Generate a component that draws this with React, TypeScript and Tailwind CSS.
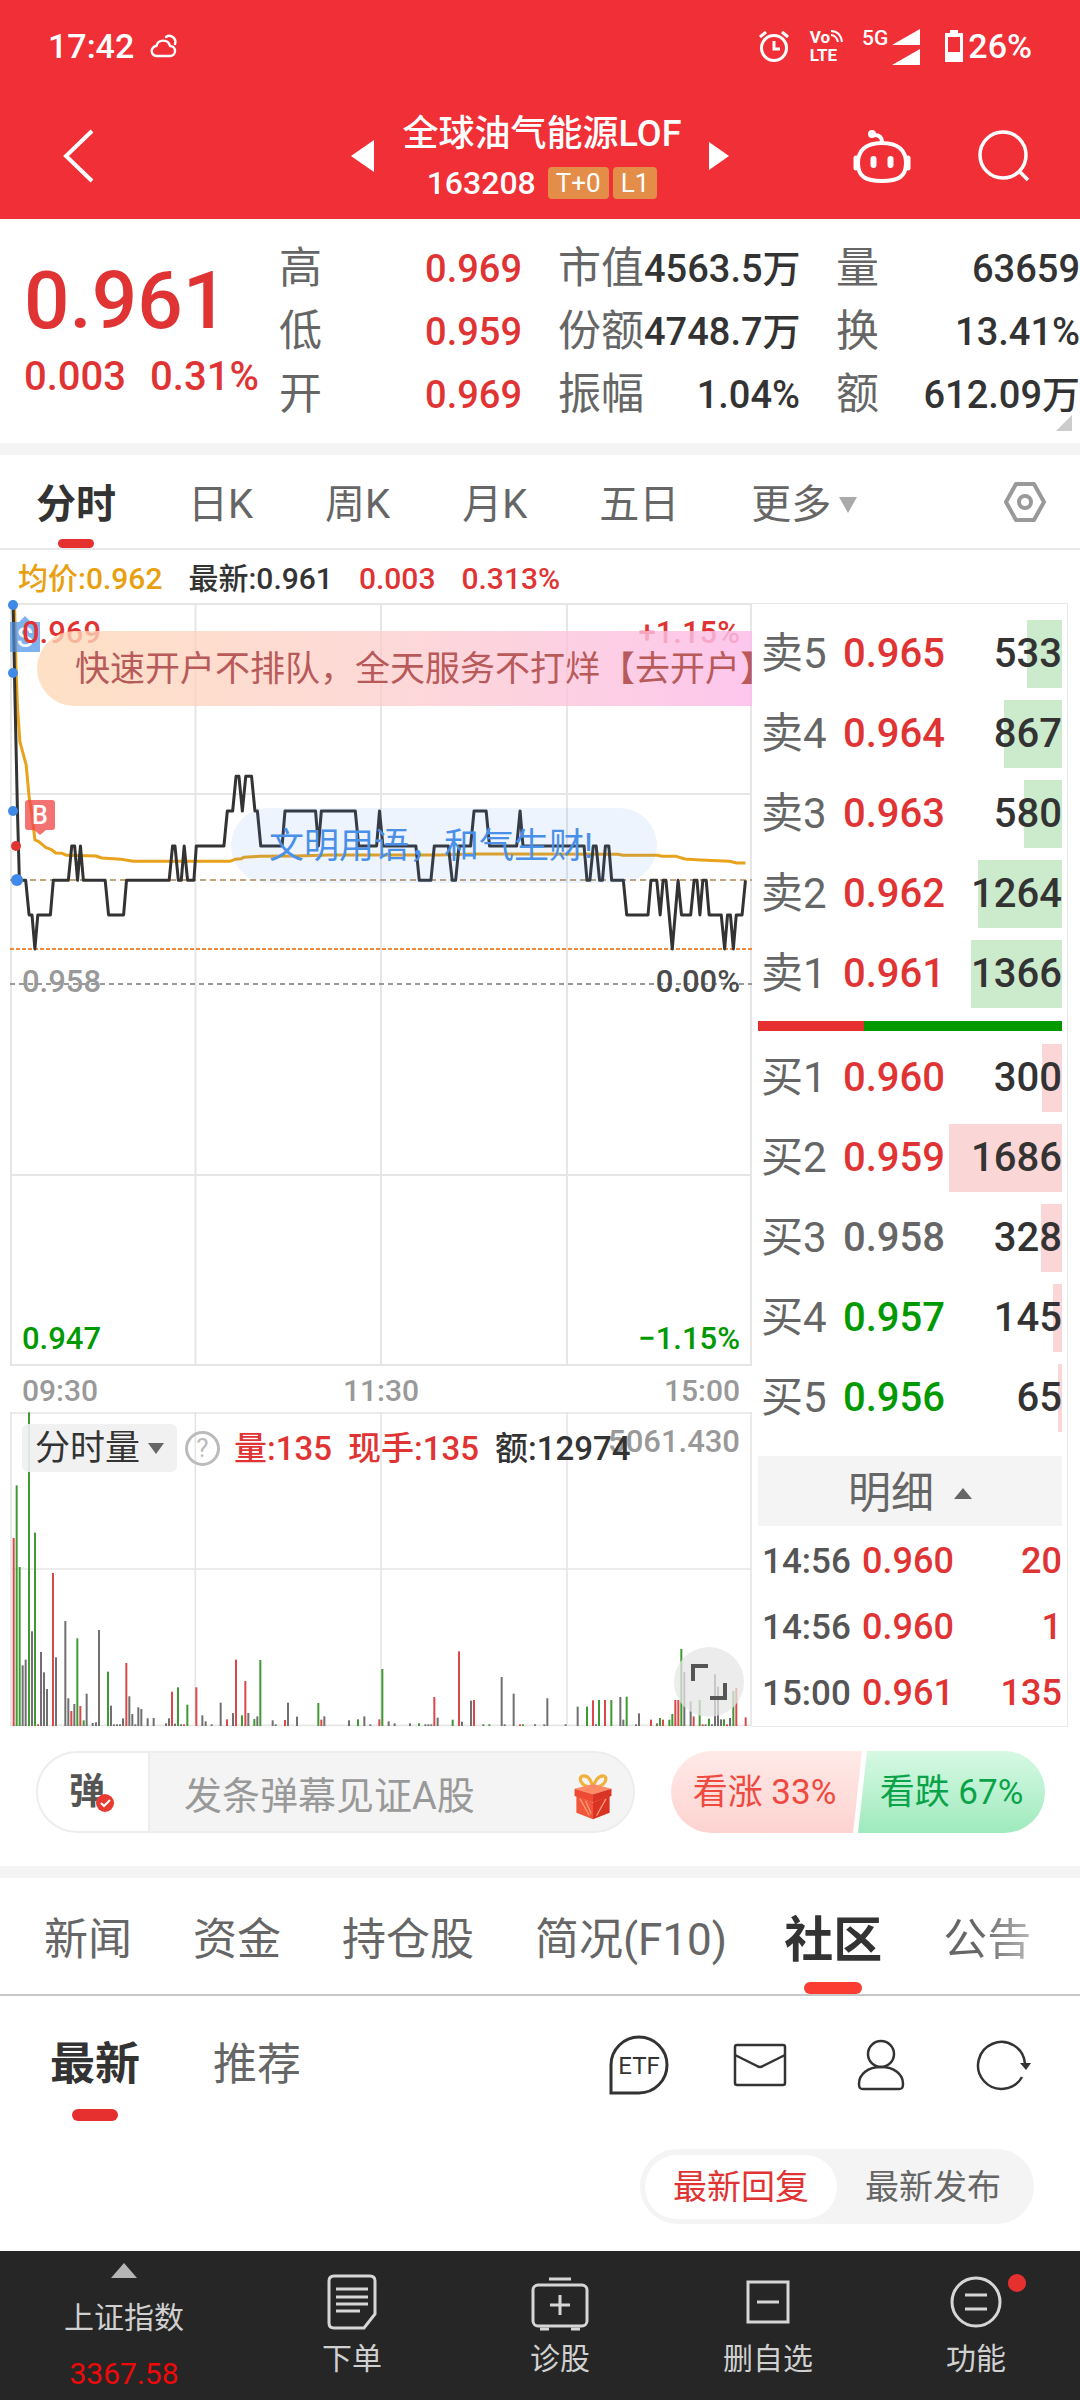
import { useState } from "react";
import type { ReactNode } from "react";

type Tone = "r" | "g" | "k";
type Bar = [number, number, Tone];

const toneFill: Record<Tone, string> = { r: "#d9494a", g: "#3f9a34", k: "#707070" };

const morning: Bar[] = [
  [41, 744, "r"], [50, 586, "g"], [59, 831, "g"], [68, 1126, "k"], [77, 1109, "k"], [87, 367, "g"], [96, 1024, "k"],
  [105, 728, "g"], [114, 1303, "r"], [123, 1086, "k"], [132, 1147, "k"], [141, 1197, "k"], [159, 849, "r"], [168, 1102, "k"],
  [196, 993, "k"], [205, 1225, "k"], [214, 1263, "r"], [223, 1242, "k"], [232, 1045, "g"], [241, 1248, "r"], [251, 1291, "g"],
  [260, 1211, "k"], [278, 1299, "k"], [288, 1297, "k"], [297, 1020, "k"], [324, 1145, "g"], [333, 1247, "k"], [342, 1303, "k"],
  [351, 1303, "k"], [360, 1303, "k"], [369, 1285, "k"], [379, 1119, "r"], [388, 1219, "k"], [397, 1272, "k"], [406, 1303, "k"],
  [415, 1252, "k"], [424, 1257, "k"], [443, 1285, "k"], [461, 1284, "k"], [498, 1300, "k"], [507, 1285, "k"], [516, 1205, "r"],
  [525, 1301, "k"], [534, 1192, "g"], [543, 1303, "k"], [552, 1303, "r"], [562, 1244, "g"], [589, 1192, "r"], [607, 1276, "k"],
  [617, 1294, "k"], [635, 1303, "k"], [662, 1238, "k"], [681, 1288, "r"], [699, 1269, "k"], [708, 1109, "r"], [726, 1276, "g"],
  [736, 1173, "r"], [745, 1269, "k"], [763, 1287, "g"], [772, 1279, "k"], [781, 1110, "g"], [818, 1291, "k"], [827, 1303, "k"],
  [855, 1290, "r"], [864, 1238, "k"], [891, 1280, "k"], [955, 1239, "g"], [964, 1289, "r"], [973, 1279, "k"], [1047, 1291, "k"],
  [1074, 1288, "g"], [1093, 1279, "k"], [1111, 1303, "k"], [1138, 1288, "r"], [1147, 1137, "g"], [1166, 1294, "k"], [1184, 1300, "k"],
];

const afternoon: Bar[] = [
  [60, 1300, "k"], [87, 1300, "g"], [106, 1303, "k"], [115, 1303, "k"], [124, 1303, "k"], [133, 1221, "r"], [143, 1283, "k"],
  [188, 1289, "g"], [207, 1084, "r"], [216, 1295, "k"], [243, 1232, "k"], [252, 1230, "r"], [280, 1303, "k"], [298, 1303, "g"],
  [335, 1161, "k"], [344, 1303, "k"], [371, 1211, "k"], [390, 1303, "r"], [399, 1303, "g"], [435, 1303, "k"], [463, 1303, "k"],
  [472, 1225, "k"], [527, 1303, "k"], [563, 1250, "k"], [591, 1250, "g"], [609, 1231, "r"], [618, 1303, "k"], [627, 1230, "g"],
  [645, 1230, "r"], [664, 1230, "g"], [691, 1221, "k"], [700, 1289, "k"], [710, 1220, "g"], [738, 1303, "k"], [747, 1270, "k"],
  [783, 1289, "r"], [801, 1300, "k"], [810, 1284, "g"], [819, 1289, "r"], [838, 1289, "g"], [847, 1272, "g"], [856, 1230, "r"],
  [865, 1230, "r"], [874, 1077, "g"], [883, 1146, "k"], [902, 1234, "k"], [911, 1279, "r"], [929, 1230, "g"], [938, 1303, "r"],
  [947, 1303, "k"], [957, 1286, "g"], [966, 1303, "k"], [975, 1153, "k"], [984, 1190, "k"], [993, 1288, "k"], [1002, 1288, "g"],
  [1011, 1303, "r"], [1020, 1284, "k"], [1030, 1203, "g"], [1039, 1194, "r"], [1067, 1282, "r"],
];

const AFTERNOON_START = 1170;
const bars: Bar[] = [...morning, ...afternoon.map(([x, y, t]): Bar => [x + AFTERNOON_START, y, t])];

const priceLine =
  "M27,-288 L31,0 L36,333 L40,541 L53,541 L60,645 L66,645 L72,747 L78,645 L104,645 L110,541 L141,541 L148,438 L154,438 L160,541 L166,438 L172,541 L217,541 L224,645 L255,645 L261,541 L349,541 L356,438 L361,438 L368,541 L374,541 L380,438 L387,541 L400,541 L405,438 L462,438 L469,333 L480,333 L487,229 L493,229 L500,333 L507,229 L519,229 L526,333 L531,333 L538,438 L582,438 L588,333 L651,333 L657,438 L663,333 L733,333 L740,438 L777,438 L783,333 L790,438 L858,438 L865,541 L889,541 L896,438 L925,438 L933,541 L940,541 L947,438 L971,438 L978,333 L1003,333 L1010,438 L1066,438 L1073,333 L1079,438 L1205,438 L1211,541 L1217,541 L1224,438 L1230,438 L1237,541 L1243,541 L1249,438 L1256,438 L1262,541 L1286,541 L1293,645 L1337,645 L1343,541 L1355,541 L1362,645 L1368,541 L1374,541 L1387,747 L1399,541 L1406,645 L1425,645 L1432,541 L1438,541 L1444,645 L1450,541 L1457,541 L1463,645 L1488,645 L1495,747 L1501,645 L1507,645 L1513,747 L1519,645 L1531,645 L1538,541";
const averageLine =
  "M30,-288 L33,-100 L36,20 L41,125 L54,195 L60,290 L66,345 L72,420 L80,425 L95,443 L105,448 L115,459 L128,460 L138,466 L198,468 L210,474 L250,478 L275,484 L474,484 L485,478 L498,476 L503,472 L535,469 L610,468 L680,465 L905,465 L975,462 L1275,463 L1285,466 L1357,466 L1365,469 L1395,469 L1413,477 L1445,480 L1505,484 L1520,489 L1538,489";

const RED = "text-[#e03434]";
const GREEN = "text-[#009900]";
const GREY = "text-[#666666]";

const sells = [
  ["卖5", "0.965", "533", 35],
  ["卖4", "0.964", "867", 58],
  ["卖3", "0.963", "580", 38],
  ["卖2", "0.962", "1264", 84],
  ["卖1", "0.961", "1366", 91],
] as const;

const buys = [
  ["买1", "0.960", "300", 20, RED],
  ["买2", "0.959", "1686", 113, RED],
  ["买3", "0.958", "328", 21, GREY],
  ["买4", "0.957", "145", 9, GREEN],
  ["买5", "0.956", "65", 4, GREEN],
] as const;

function StatusBar() {
  return (
    <div className="flex h-[92px] items-center justify-between px-12 font-medium">
      <div className="flex items-center gap-4">
        <span className="text-[34px] leading-none">17:42</span>
        <svg className="h-6 w-7" viewBox="0 0 28 24" fill="none" stroke="#fff" strokeWidth="2.4" strokeLinecap="round" aria-hidden="true">
          <path d="M7 22a5 5 0 0 1-.6-10A7 7 0 0 1 20 12a5 5 0 0 1 0 10Z" strokeLinejoin="round" />
          <path d="M16 3a6 6 0 0 1 9 7" />
        </svg>
      </div>
      <div className="flex items-center">
        <svg className="h-8 w-8" viewBox="0 0 32 32" fill="none" stroke="#fff" strokeWidth="3" aria-hidden="true">
          <circle cx="16" cy="18" r="12.5" />
          <path d="M16 11v8h6M2 7l6-5M30 7l-6-5" />
        </svg>
        <div className="ml-5 flex flex-col text-[17px] leading-[18px] font-bold">
          <span className="flex">
            Vo
            <svg className="h-4 w-4" viewBox="0 0 16 16" fill="none" stroke="#fff" strokeWidth="2" aria-hidden="true">
              <path d="M1 3c6 0 10 4 11 11M1 7c3 0 6 3 7 7" />
            </svg>
          </span>
          <span>LTE</span>
        </div>
        <div className="ml-4 flex items-start">
          <span className="text-[21px] leading-5">5G</span>
          <svg className="mt-px ml-1 h-9 w-7" viewBox="0 0 28 36" fill="#fff" aria-hidden="true">
            <path d="M28 0v16H0ZM28 20v16H0Z" />
          </svg>
        </div>
        <svg className="ml-6 h-8 w-5" viewBox="0 0 20 32" aria-hidden="true">
          <path d="M6 0h8v3h5v29H1V3h5Z" fill="#fff" />
          <path d="M4 7h12v15H4Z" fill="#f12f36" />
        </svg>
        <span className="ml-1 text-[34px] leading-none">26%</span>
      </div>
    </div>
  );
}

function TopBar() {
  return (
    <div className="grid h-[127px] grid-cols-[1fr_auto_1fr] items-center">
      <button aria-label="返回" className="ml-[62px] w-8">
        <svg className="h-14 w-8" viewBox="0 0 32 56" fill="none" stroke="#fff" strokeWidth="4" aria-hidden="true">
          <path d="M30 3 4 28l26 25" />
        </svg>
      </button>
      <div className="flex items-center">
        <button aria-label="上一只">
          <svg className="h-8 w-6" viewBox="0 0 24 32" fill="#fff" aria-hidden="true"><path d="M23 0v32L0 16Z" /></svg>
        </button>
        <div className="mx-7 flex flex-col items-center gap-3">
          <h1 className="text-[36px] leading-[42px] font-medium whitespace-nowrap">全球油气能源LOF</h1>
          <div className="flex h-8 items-center gap-1">
            <span className="mr-2 text-[32px] leading-none font-medium">163208</span>
            <span className="rounded-sm bg-[#e48d48] px-2 text-[26px] leading-8">T+0</span>
            <span className="rounded-sm bg-[#e48d48] px-2 text-[26px] leading-8">L1</span>
          </div>
        </div>
        <button aria-label="下一只">
          <svg className="h-7 w-5" viewBox="0 0 20 28" fill="#fff" aria-hidden="true"><path d="M0 0v28l20-14Z" /></svg>
        </button>
      </div>
      <div className="flex justify-end gap-[66px] pr-[50px]">
        <button aria-label="助手">
          <svg className="h-[54px] w-[60px]" viewBox="0 0 60 54" fill="none" stroke="#fff" strokeWidth="4" aria-hidden="true">
            <path d="M30 14C13 14 6 22 6 34c0 14 8 18 24 18s24-4 24-18c0-12-7-20-24-20Z" />
            <path d="M30 13c0-5-3-7-8-7" />
            <circle cx="20" cy="5" r="4" fill="#fff" stroke="none" />
            <path d="M4 29v10M56 29v10" strokeWidth="5" strokeLinecap="round" />
            <path d="M21.500 30v6M38.500 30v6" strokeWidth="6" strokeLinecap="round" />
          </svg>
        </button>
        <button aria-label="搜索">
          <svg className="h-[52px] w-[52px]" viewBox="0 0 52 52" fill="none" stroke="#fff" strokeWidth="3.500" aria-hidden="true">
            <circle cx="25" cy="25" r="23" />
            <path d="m41 41 9 9" />
          </svg>
        </button>
      </div>
    </div>
  );
}

function Stat({ label, value, tone = "text-[#333333]" }: { label: string; value: string; tone?: string }) {
  return (
    <div className="flex h-[63px] items-center justify-between whitespace-nowrap">
      <dt className="text-[43px] leading-none text-[#666666]">{label}</dt>
      <dd className={`text-[38px] leading-none font-medium ${tone}`}>{value}</dd>
    </div>
  );
}

function Quote() {
  return (
    <section className="relative flex h-[224px] pt-[18px] pl-6">
      <div className={`w-[255px] ${RED}`}>
        <div className="mt-5 text-[80px] leading-[88px] font-medium">0.961</div>
        <div className="mt-2 flex gap-6 text-[40px] leading-[48px] font-medium">
          <span>0.003</span>
          <span>0.31%</span>
        </div>
      </div>
      <dl className="w-[243px]">
        <Stat label="高" value="0.969" tone={RED} />
        <Stat label="低" value="0.959" tone={RED} />
        <Stat label="开" value="0.969" tone={RED} />
      </dl>
      <dl className="ml-9 w-[242px]">
        <Stat label="市值" value="4563.5万" />
        <Stat label="份额" value="4748.7万" />
        <Stat label="振幅" value="1.04%" />
      </dl>
      <dl className="ml-9 flex-1">
        <Stat label="量" value="63659" />
        <Stat label="换" value="13.41%" />
        <Stat label="额" value="612.09万" />
      </dl>
      <svg className="absolute right-2 bottom-3 h-4 w-4" viewBox="0 0 16 16" fill="#cccccc" aria-hidden="true"><path d="M16 0v16H0Z" /></svg>
    </section>
  );
}

function PeriodTabs() {
  return (
    <nav className="flex h-[95px] items-center border-b-2 border-[#e8e8e8] pr-[34px] pl-9 text-[40px] leading-none text-[#666666]">
      <div className="flex flex-1 items-center gap-[72px] pt-[6px] whitespace-nowrap">
        <button className="relative font-bold text-[#333333]">
          分时
          <span className="absolute -bottom-[23px] left-1/2 h-[9px] w-9 -translate-x-1/2 rounded-full bg-[#e63030]" />
        </button>
        <button>日K</button>
        <button>周K</button>
        <button>月K</button>
        <button>五日</button>
        <button className="flex items-center gap-2">
          更多
          <svg className="h-4 w-[18px]" viewBox="0 0 18 16" fill="#aaaaaa" aria-hidden="true"><path d="M0 0h18L9 16Z" /></svg>
        </button>
      </div>
      <button aria-label="设置">
        <svg className="h-[40px] w-[42px]" viewBox="0 0 42 40" fill="none" stroke="#999999" strokeWidth="4" strokeLinejoin="round" aria-hidden="true">
          <path d="M12 2h18l10 18-10 18H12L2 20Z" />
          <circle cx="21" cy="20" r="6" />
        </svg>
      </button>
    </nav>
  );
}

function PriceChart() {
  return (
    <div className="relative h-[763px] text-[31px] leading-none font-medium">
      <svg className="absolute inset-0 h-full w-full" viewBox="10 603 742 763" preserveAspectRatio="none" fill="none" aria-hidden="true">
        <g stroke="#e6e6e6" strokeWidth="2">
          <path d="M10 604H752M10 794H752M10 1175H752M10 1365H752M11 603V1366M195.500 603V1366M381 603V1366M567 603V1366M751 603V1366" />
        </g>
        <path d="M10 984H752" stroke="#999999" strokeWidth="2" strokeDasharray="5 4" />
        <path d="M10 880H752" stroke="#c2a47c" strokeWidth="2" strokeDasharray="6 4" />
        <path d="M10 949H752" stroke="#ee8a3a" strokeWidth="2" strokeDasharray="4 2" />
        <g transform="translate(0 700) scale(.4847 .3333)" strokeWidth="3" strokeLinejoin="round">
          <path d={averageLine} stroke="#e8a21c" vectorEffect="non-scaling-stroke" />
          <path d={priceLine} stroke="#333333" vectorEffect="non-scaling-stroke" />
        </g>
        <path d="M10 622h9l6-6 6 6h9v30H10Z" fill="#4a90e8" opacity=".7" />
        <text x="17" y="647" fontSize="27" fill="#fff" opacity=".9">S</text>
        <path d="M28 800h24q3 0 3 3v24q0 3-3 3h-6l-6 5-6-5h-6q-3 0-3-3v-24q0-3 3-3Z" fill="#ef4444" opacity=".75" />
        <text x="32" y="824" fontSize="25" fill="#fff">B</text>
        <g fill="#3f8ae8">
          <circle cx="13" cy="605" r="5" />
          <circle cx="13" cy="673" r="5" />
          <circle cx="13" cy="811" r="5" />
          <circle cx="17" cy="880" r="6" />
        </g>
        <circle cx="16" cy="846" r="5" fill="#e03434" />
      </svg>
      <span className={`absolute top-[14px] left-3 ${RED}`}>0.969</span>
      <span className={`absolute top-[14px] right-3 ${RED}`}>+1.15%</span>
      <span className="absolute top-[363px] left-3 text-[#999999]">0.958</span>
      <span className="absolute top-[363px] right-3 text-[#4a4a4a]">0.00%</span>
      <span className={`absolute bottom-3 left-3 ${GREEN}`}>0.947</span>
      <span className={`absolute right-3 bottom-3 ${GREEN}`}>−1.15%</span>
      <a
        href="#open"
        className="absolute top-7 right-0 left-[27px] flex h-[75px] items-center overflow-hidden rounded-l-full bg-linear-to-r from-[#fdd9b6]/80 via-[#fdc8c8]/70 to-[#fcbde9]/85 pt-[2px] pl-[38px] text-[35px] font-normal whitespace-nowrap text-[#b95a5a]"
      >
        快速开户不排队，全天服务不打烊【去开户】
      </a>
      <div className="absolute top-[205px] left-[221px] flex h-[75px] items-center rounded-full bg-[#4a90e8]/10 pt-[2px] pr-16 pl-[38px] text-[35px] font-normal whitespace-nowrap text-[#4a90e8]">
        文明用语，和气生财!
      </div>
    </div>
  );
}

function VolumeChart() {
  return (
    <div className="relative h-[314px] text-[33px] leading-none font-medium">
      <svg className="absolute inset-0 h-full w-full" viewBox="30 366 2226 942" preserveAspectRatio="none" aria-hidden="true">
        <path d="M30 369H2256M30 837H2256M30 1306H2256M33 366V1308M586 366V1308M1143 366V1308M1701 366V1308M2253 366V1308" stroke="#e6e6e6" strokeWidth="5" fill="none" />
        {bars.map(([x, y, tone]) => (
          <rect key={x} x={x - 3} y={y} width="6" height={1308 - y} fill={toneFill[tone]} />
        ))}
      </svg>
      <span className="absolute top-[14px] right-3 text-[31px] text-[#999999]">5061.430</span>
      <div className="absolute top-3 left-3 flex h-12 items-center whitespace-nowrap">
        <button className="flex h-12 items-center gap-2 rounded-md bg-[#f0f0f0]/90 px-[13px] text-[35px] font-normal text-[#333333]">
          分时量
          <svg className="h-[11px] w-4" viewBox="0 0 16 11" fill="#666666" aria-hidden="true"><path d="M0 0h16L8 11Z" /></svg>
        </button>
        <button aria-label="说明" className="ml-2 flex size-[35px] items-center justify-center rounded-full border-[3px] border-[#bbbbbb] text-[26px] font-normal text-[#bbbbbb]">?</button>
        <span className={`ml-[14px] ${RED}`}>量:135</span>
        <span className={`ml-4 ${RED}`}>现手:135</span>
        <span className="ml-4 text-[#333333]">额:12974</span>
      </div>
      <button aria-label="全屏" className="absolute right-2 bottom-[9px] flex size-[70px] items-center justify-center rounded-full bg-[#e6e6e6]/75">
        <svg className="size-9" viewBox="0 0 36 36" fill="none" stroke="#555555" strokeWidth="4" aria-hidden="true">
          <path d="M2 17V2h15M34 19v15H19" />
        </svg>
      </button>
    </div>
  );
}

function Level({ name, price, size, width, tone, fill }: { name: string; price: string; size: string; width: number; tone: string; fill: string }) {
  return (
    <li className="relative flex h-[68px] items-center text-[40px] leading-none font-medium">
      <span className={`absolute inset-y-0 right-0 ${fill}`} style={{ width }} />
      <span className="w-[85px] pl-[3px] text-[42px] font-normal whitespace-nowrap text-[#666666]">{name}</span>
      <span className={tone}>{price}</span>
      <span className="relative flex-1 text-right text-[#333333]">{size}</span>
    </li>
  );
}

function OrderBook() {
  return (
    <aside className="flex w-[316px] shrink-0 flex-col border-t border-r border-b border-[#e8e8e8] pr-[5px] pl-[6px]">
      <ul className="mt-4 flex flex-col gap-3">
        {sells.map(([n, p, s, w]) => (
          <Level key={n} name={n} price={p} size={s} width={w} tone={RED} fill="bg-[#cceacc]" />
        ))}
      </ul>
      <div className="mt-[13px] flex h-[10px]">
        <span className="w-[35%] bg-[#e63030]" />
        <span className="flex-1 bg-[#009900]" />
      </div>
      <ul className="mt-[13px] flex flex-col gap-3">
        {buys.map(([n, p, s, w, tone]) => (
          <Level key={n} name={n} price={p} size={s} width={w} tone={tone} fill="bg-[#fad6d6]" />
        ))}
      </ul>
      <button className="mt-6 flex h-[70px] items-center justify-center gap-5 bg-[#f4f4f4] pt-1 text-[43px] leading-none text-[#666666]">
        明细
        <svg className="h-[11px] w-[18px]" viewBox="0 0 18 11" fill="#666666" aria-hidden="true"><path d="M0 11h18L9 0Z" /></svg>
      </button>
      <table className="mt-[2px] w-full text-[36px] leading-none font-medium">
        <tbody>
          {[
            ["14:56", "0.960", "20"],
            ["14:56", "0.960", "1"],
            ["15:00", "0.961", "135"],
          ].map(([t, p, v], i) => (
            <tr key={i} className="h-[66px]">
              <td className="w-[104px] pl-1 text-[35px] text-[#555555]">{t}</td>
              <td className={RED}>{p}</td>
              <td className={`text-right ${RED}`}>{v}</td>
            </tr>
          ))}
        </tbody>
      </table>
    </aside>
  );
}

function CommentRow() {
  return (
    <section className="flex h-[139px] items-start gap-9 pt-6 pr-[35px] pl-9">
      <div className="flex h-[82px] flex-1 overflow-hidden rounded-full border-2 border-[#ededed] bg-[#f4f4f4]">
        <button aria-label="弹幕" className="flex w-[112px] items-center justify-center border-r-2 border-[#ededed] bg-white pr-3">
          <span className="relative text-[36px] leading-none font-bold text-[#555555]">
            弹
            <svg className="absolute -right-[10px] -bottom-[3px] size-5" viewBox="0 0 20 20" fill="none" aria-hidden="true">
              <circle cx="10" cy="10" r="9" fill="#e83c32" />
              <path d="m6 10 3 3 6-6" stroke="#fff" strokeWidth="2" />
            </svg>
          </span>
        </button>
        <input aria-label="发弹幕" placeholder="发条弹幕见证A股" className="min-w-0 flex-1 bg-transparent pt-2 pl-[34px] text-[38px] leading-none text-[#333333] outline-none placeholder:text-[#999999]" />
        <svg className="mt-5 mr-[18px] h-[48px] w-11 shrink-0" viewBox="0 0 44 52" fill="none" aria-hidden="true">
          <path d="M22 16C6 14 6 3 12 3s8 6 10 13C24 9 28 3 33 3s5 11-11 13Z" stroke="#f0b23c" strokeWidth="3.500" />
          <path d="M2 17 22 12l20 5-20 6Z" fill="#ff8a66" />
          <path d="M2 17l20 6v9L2 25Z" fill="#ef4a34" />
          <path d="M42 17l-20 6v9l20-7Z" fill="#d93425" />
          <path d="M4 25l18 7v18L4 43Z" fill="#f2543c" />
          <path d="M40 25l-18 7v18l18-7Z" fill="#da3323" />
          <path d="m8 28 10 18M14 30l6 14M36 28 26 46" stroke="#ff9a70" strokeWidth="1.500" />
        </svg>
      </div>
      <div className="flex h-[82px] w-[374px] overflow-hidden rounded-full text-[35px] leading-none whitespace-nowrap">
        <button className="flex-1 bg-linear-to-b from-[#ffeae8] to-[#fdd3d0] pr-1 text-[#ee4a40] [clip-path:polygon(0_0,100%_0,calc(100%-9px)_100%,0_100%)]">看涨 33%</button>
        <button className="-ml-1 flex-1 bg-linear-to-b from-[#d6f9e4] to-[#9eeabd] text-[#0ba34a] [clip-path:polygon(9px_0,100%_0,100%_100%,0_100%)]">看跌 67%</button>
      </div>
    </section>
  );
}

function CommunityTabs() {
  return (
    <nav className="flex h-[118px] items-center gap-[61px] overflow-hidden border-b-2 border-[#c8c8c8] pt-2 pl-11 text-[44px] leading-none whitespace-nowrap text-[#666666]">
      <button>新闻</button>
      <button>资金</button>
      <button>持仓股</button>
      <button>简况(F10)</button>
      <button className="relative -ml-1 flex h-full items-center text-[49px] font-bold text-[#333333]">
        社区
        <span className="absolute bottom-0 left-1/2 h-3 w-[58px] -translate-x-1/2 rounded-full bg-[#fa3c32]" />
      </button>
      <button className="bg-linear-to-r from-[#666666] from-40% to-[#b8b8b8] bg-clip-text text-transparent">公告</button>
    </nav>
  );
}

function IconButton({ label, children }: { label: string; children: ReactNode }) {
  return (
    <button aria-label={label}>
      <svg className="h-[60px] w-[60px]" viewBox="0 0 60 60" fill="none" stroke="#333333" strokeWidth="2.500" aria-hidden="true">
        {children}
      </svg>
    </button>
  );
}

function Community() {
  const [sort, setSort] = useState("reply");
  const on = "rounded-full bg-white text-[#e03434]";
  const off = "text-[#666666]";
  return (
    <section className="h-[255px]">
      <div className="flex h-[137px] items-center justify-between pr-12 pl-[50px] text-[45px] leading-none">
        <div className="flex gap-[73px]">
          <button className="relative font-bold text-[#333333]">
            最新
            <span className="absolute -bottom-[34px] left-1/2 h-3 w-[46px] -translate-x-1/2 rounded-full bg-[#e63030]" />
          </button>
          <button className="text-[44px] text-[#666666]">推荐</button>
        </div>
        <div className="flex gap-[61px]">
          <IconButton label="ETF">
            <path d="M2 58V30a28 28 0 1 1 28 28Z" strokeWidth="3" />
            <text x="30" y="39" textAnchor="middle" fontSize="24" fill="#333333" stroke="none">ETF</text>
          </IconButton>
          <IconButton label="消息">
            <rect x="5" y="10" width="50" height="40" rx="2" />
            <path d="m5 20 22 11q3 2 6 0l22-11" />
          </IconButton>
          <IconButton label="我的">
            <circle cx="30" cy="19" r="13" />
            <path d="M30 32c-13 0-22 7-22 17 0 4 1 5 4 5h36c3 0 4-1 4-5 0-10-9-17-22-17Z" />
          </IconButton>
          <IconButton label="刷新">
            <path d="M50 42a23.500 23.500 0 1 1 3-13" />
            <path d="M48 28h11l-5 7Z" fill="#333333" stroke="none" />
          </IconButton>
        </div>
      </div>
      <div className="mt-4 mr-[46px] ml-auto flex h-[75px] w-fit items-center rounded-full bg-[#f4f4f4] px-[5px] text-[34px] leading-none">
        <button onClick={() => setSort("reply")} className={`h-16 px-7 ${sort === "reply" ? on : off}`}>最新回复</button>
        <button onClick={() => setSort("post")} className={`h-16 px-7 ${sort === "post" ? on : off}`}>最新发布</button>
      </div>
    </section>
  );
}

function NavItem({ label, dot, children }: { label: string; dot?: boolean; children: ReactNode }) {
  return (
    <button className="relative flex flex-col items-center pt-5">
      <svg className="h-[60px] w-[60px]" viewBox="0 0 60 60" fill="none" stroke="#d6d6d6" strokeWidth="3" aria-hidden="true">
        {children}
        {dot && <circle cx="71" cy="12" r="9" fill="#e63030" stroke="none" />}
      </svg>
      <span className="mt-3 leading-8">{label}</span>
    </button>
  );
}

function BottomNav() {
  return (
    <nav className="grid h-[150px] grid-cols-[248fr_208fr_208fr_208fr_208fr] bg-[#262626] text-[30px] text-[#d0d0d0]">
      <button className="flex flex-col items-center pt-3">
        <svg className="h-[15px] w-[26px]" viewBox="0 0 26 15" fill="#b5b5b5" aria-hidden="true"><path d="M0 15h26L13 0Z" /></svg>
        <span className="mt-6 leading-8">上证指数</span>
        <span className="mt-6 leading-8 text-[#ee0a0a]">3367.58</span>
      </button>
      <NavItem label="下单">
        <path d="M12 5h36q5 0 5 5v33L42 57H12q-5 0-5-5V10q0-5 5-5Z" />
        <path d="M14 18h32M14 26h32M14 33h32M14 40h24" />
      </NavItem>
      <NavItem label="诊股">
        <rect x="3" y="14" width="54" height="41" rx="5" />
        <path d="M19 8h22M30 24v20M20 34h20M10 58h9M41 58h9" />
      </NavItem>
      <NavItem label="删自选">
        <path d="M10 11h40v40H10ZM19 31h22" />
      </NavItem>
      <NavItem label="功能" dot>
        <circle cx="30" cy="31" r="24" />
        <path d="M19 24h22M19 38h22" />
      </NavItem>
    </nav>
  );
}

export default function App() {
  return (
    <div lang="zh-CN" className="w-full overflow-hidden bg-white font-['Roboto','Noto_Sans_CJK_SC',sans-serif] text-[#333333] [&_svg]:overflow-visible">
      <header className="bg-[#f12f36] text-white">
        <StatusBar />
        <TopBar />
      </header>
      <Quote />
      <div className="h-3 bg-[#f4f4f4]" />
      <PeriodTabs />
      <div className="flex h-[53px] items-center gap-[26px] pt-1 pl-[18px] text-[30px] leading-none font-medium">
        <span className="text-[#e8a010]">均价:0.962</span>
        <span>最新:0.961</span>
        <span className={RED}>0.003</span>
        <span className={RED}>0.313%</span>
      </div>
      <main className="flex pr-3 pl-[10px]">
        <div className="min-w-0 flex-1">
          <PriceChart />
          <div className="flex h-[46px] items-center justify-between px-3 pt-1 text-[30px] leading-none font-medium text-[#999999]">
            <span>09:30</span>
            <span>11:30</span>
            <span>15:00</span>
          </div>
          <VolumeChart />
        </div>
        <OrderBook />
      </main>
      <CommentRow />
      <div className="h-3 bg-[#f4f4f4]" />
      <CommunityTabs />
      <Community />
      <BottomNav />
    </div>
  );
}
